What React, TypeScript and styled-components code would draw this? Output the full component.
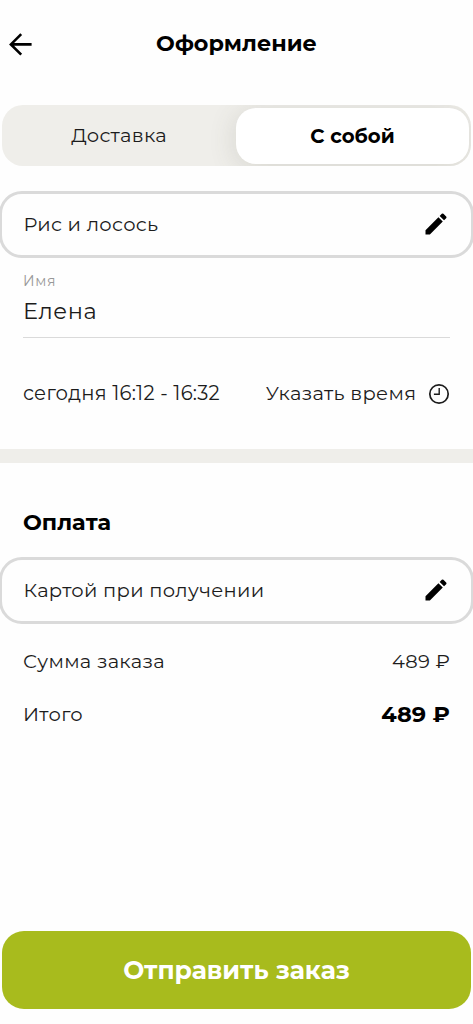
import React from "react";
import styled, { createGlobalStyle } from "styled-components";

const GlobalStyle = createGlobalStyle`
  * { box-sizing: border-box; }
  body {
    margin: 0;
    background: #fefefe;
    color: #1c1c1c;
    font-family: Montserrat, Inter, "Noto Sans", sans-serif;
  }
  button { font: inherit; color: inherit; border: 0; padding: 0; background: none; }
`;

type TextProps = { $size?: number; $height?: number; $weight?: number; $color?: string; $track?: number };

const Text = styled.span<TextProps>`
  font-size: ${(p) => p.$size ?? 19.5}px;
  line-height: ${(p) => p.$height ?? 28}px;
  font-weight: ${(p) => p.$weight ?? 400};
  letter-spacing: ${(p) => p.$track ?? 0.3}px;
  margin-right: ${(p) => -(p.$track ?? 0.3)}px;
  color: ${(p) => p.$color ?? "#1c1c1c"};
  white-space: nowrap;
`;

const Screen = styled.main`
  width: 473px;
  height: 1024px;
  display: flex;
  flex-direction: column;
  overflow: hidden;
`;

const Header = styled.header`
  height: 105px;
  padding: 29px 8px 0;
  display: grid;
  grid-template-columns: 26px 1fr 26px;
  align-items: start;
  justify-items: center;
`;

const BackButton = styled.button`
  width: 26px;
  height: 30px;
  display: grid;
  place-items: center;
`;

const Segments = styled.div`
  height: 61px;
  margin: 0 2px;
  padding: 2.5px 2px 2.5px 0;
  display: grid;
  grid-template-columns: 234px 1fr;
  flex: none;
  border-radius: 21px;
  background: #efeeea;
  overflow: hidden;
`;

const Segment = styled.button<{ $active?: boolean }>`
  display: flex;
  align-items: center;
  justify-content: center;
  padding-bottom: ${(p) => (p.$active ? 0 : 2)}px;
  border-radius: 20px;
  background: ${(p) => (p.$active ? "#ffffff" : "transparent")};
  box-shadow: ${(p) => (p.$active ? "0 4px 28px rgba(80, 80, 60, 0.16)" : "none")};
`;

const Card = styled.section<{ $top: number }>`
  height: 67px;
  flex: none;
  margin: ${(p) => p.$top}px -1px 0;
  padding: 0 21px 1px 21.5px;
  display: flex;
  align-items: center;
  justify-content: space-between;
  border: 3px solid #dadada;
  border-radius: 23px;
`;

const Field = styled.div`
  height: 80px;
  flex: none;
  margin: 0 23px;
  padding-top: 9px;
  display: flex;
  flex-direction: column;
  border-bottom: 1.5px solid #dadada;
`;

const Row = styled.div<{ $top: number }>`
  height: 28px;
  flex: none;
  margin-top: ${(p) => p.$top}px;
  padding: 0 23px;
  display: flex;
  align-items: center;
  justify-content: space-between;
`;

const TimeAction = styled.button`
  display: flex;
  align-items: center;
  gap: 12px;
`;

const Divider = styled.div`
  height: 14px;
  flex: none;
  margin-top: 42px;
  background: #efeeea;
`;

const Submit = styled.button`
  height: 78px;
  flex: none;
  margin: auto 2px 15px;
  border-radius: 22px;
  background: #a8bb1d;
`;

const Pencil = () => (
  <svg width="28" height="28" viewBox="0 0 24 24" fill="#000">
    <path d="M3 17.25V21h3.75L17.81 9.94l-3.75-3.75L3 17.25zM20.71 7.04a1 1 0 0 0 0-1.41l-2.34-2.34a1 1 0 0 0-1.41 0l-1.83 1.83 3.75 3.75 1.83-1.83z" />
  </svg>
);

export default function App() {
  return (
    <Screen>
      <GlobalStyle />
      <Header>
        <BackButton aria-label="Назад">
          <svg width="26" height="26" viewBox="0 0 26 26" fill="none" stroke="#000" strokeWidth="2.6">
            <path d="M23.6 13.4H3M13.2 3.1 2.9 13.4 13.2 23.7" />
          </svg>
        </BackButton>
        <Text $size={22.3} $track={0} $weight={700} $color="#000">Оформление</Text>
      </Header>

      <Segments>
        <Segment><Text>Доставка</Text></Segment>
        <Segment $active><Text $size={19.7} $track={0} $weight={700} $color="#000">С собой</Text></Segment>
      </Segments>

      <Card $top={25}>
        <Text>Рис и лосось</Text>
        <Pencil />
      </Card>
      <Field>
        <Text $size={14} $track={0.7} $color="#979797">Имя</Text>
        <Text $size={22.5} $track={0.6} $height={32}>Елена</Text>
      </Field>
      <Row $top={41}>
        <Text $size={19.6} $track={0.25}>сегодня 16:12 - 16:32</Text>
        <TimeAction>
          <Text>Указать время</Text>
          <svg width="22" height="22" viewBox="0 0 22 20" fill="none" stroke="#1c1c1c" overflow="visible">
            <circle cx="11" cy="11" r="9.2" strokeWidth="1.7" />
            <path d="M11.2 5v6.3H5.9" strokeWidth="1.4" />
          </svg>
        </TimeAction>
      </Row>

      <Divider />

      <Row $top={45}>
        <Text $size={22.4} $track={0} $weight={700} $color="#000">Оплата</Text>
      </Row>
      <Card $top={21}>
        <Text>Картой при получении</Text>
        <Pencil />
      </Card>
      <Row $top={23}>
        <Text>Сумма заказа</Text>
        <Text>489 ₽</Text>
      </Row>
      <Row $top={25}>
        <Text>Итого</Text>
        <Text $size={22.4} $track={0.1} $weight={700} $color="#000">489 ₽</Text>
      </Row>

      <Submit><Text $size={25} $track={0} $weight={700} $color="#fff">Отправить заказ</Text></Submit>
    </Screen>
  );
}
